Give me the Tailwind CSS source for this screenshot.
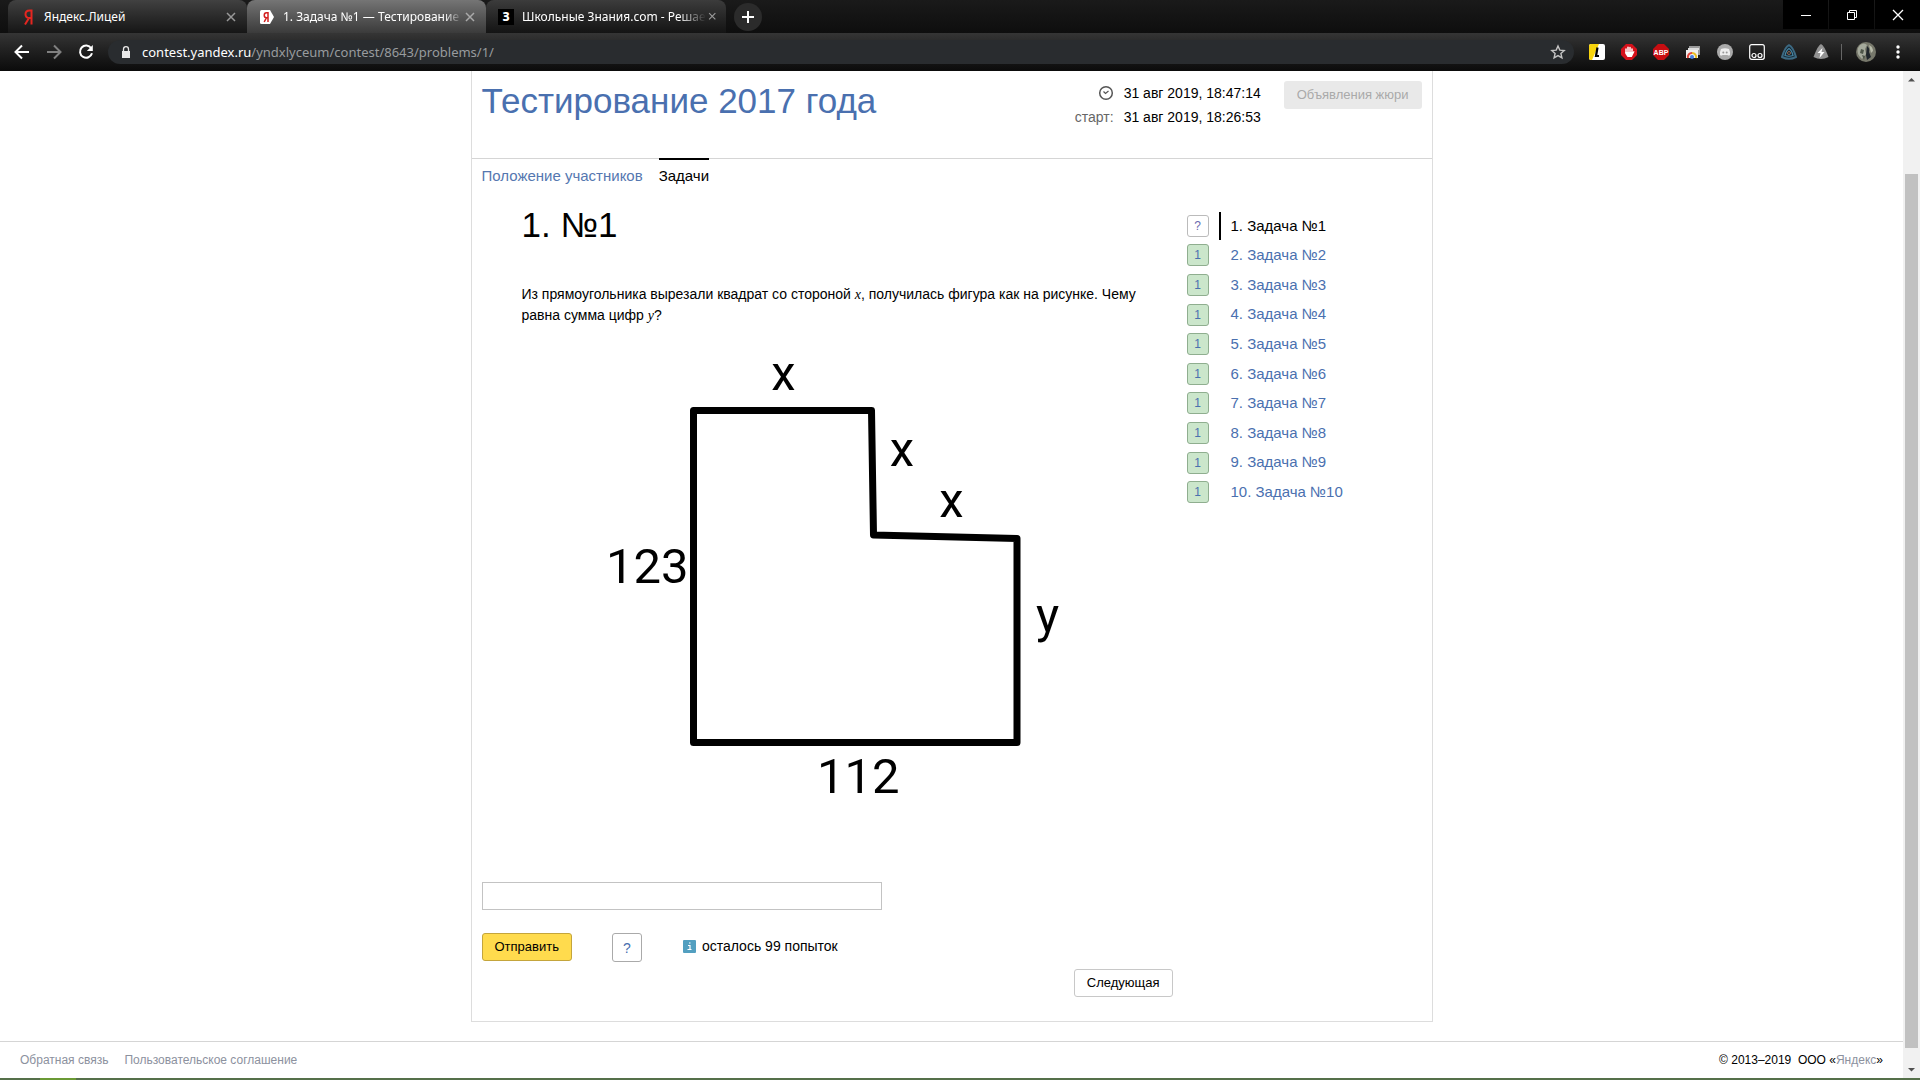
<!DOCTYPE html>
<html lang="ru">
<head>
  <meta charset="UTF-8">
  <meta name="viewport" content="width=device-width, initial-scale=1.0">
  <title>1. Задача №1 — Тестирование 2017 года</title>
  <script src="https://cdn.jsdelivr.net/npm/@tailwindcss/browser@4"></script>
</head>
<body class="h-screen flex flex-col overflow-hidden bg-white text-black font-['Liberation_Sans',Arial,sans-serif]">

  <!-- Browser window -->
  <header class="shrink-0 bg-[#111] font-['Noto_Sans','Open_Sans',sans-serif] text-white">
    <!-- Tab strip -->
    <div class="flex h-[33px] pl-2 bg-linear-to-b from-[#1a1a1a] to-[#0e0e0e]">
      <div class="flex items-center w-[239px] pl-3 pr-2 rounded-t-lg bg-linear-to-b from-[#414141] to-[#161616]">
        <svg class="w-5 h-5 shrink-0" viewBox="0 0 20 20" fill="none" stroke="#e52620" stroke-width="2"><path d="M11.500 2.500v15M11.500 3.500H9.500C6.500 3.500 5.500 5.500 5.500 7.200S6.500 11 9.500 11h2M9 11l-4 6.500"/></svg>
        <span class="flex-1 ml-1 text-xs truncate">Яндекс.Лицей</span>
        <button class="w-4 h-4" aria-label="Закрыть вкладку"><svg viewBox="0 0 16 16" fill="none" stroke="#999" stroke-width="1.500"><path d="M4 4l8 8M12 4l-8 8"/></svg></button>
      </div>
      <div class="flex items-center w-[239px] pl-3 pr-2 rounded-t-lg bg-linear-to-b from-[#757575] to-[#3b3b3b]">
        <svg class="w-4 h-4 shrink-0" viewBox="0 0 16 16"><path d="M1 2.500Q1 1 2.500 1H11l4 7-4 7H2.500Q1 15 1 13.500z" fill="#fff"/><path d="M9 3v10M9 3.700H7.500c-3 0-3 5 0 5H9M7.500 8.700L5.200 13" fill="none" stroke="#d3201f" stroke-width="1.500"/></svg>
        <span class="flex-1 ml-2 text-xs whitespace-nowrap mask-r-from-90%">1. Задача №1 — Тестирование</span>
        <button class="w-4 h-4" aria-label="Закрыть вкладку"><svg viewBox="0 0 16 16" fill="none" stroke="#aaa" stroke-width="1.500"><path d="M4 4l8 8M12 4l-8 8"/></svg></button>
      </div>
      <div class="flex items-center w-60 pl-3 pr-2 rounded-t-lg bg-linear-to-b from-[#3c3c3c] to-[#141414]">
        <span class="w-4 h-4 shrink-0 bg-black text-xs leading-4 font-extrabold text-center">З</span>
        <span class="flex-1 ml-2 text-xs whitespace-nowrap mask-r-from-85%">Школьные Знания.com - Решае</span>
        <button class="w-4 h-4" aria-label="Закрыть вкладку"><svg viewBox="0 0 16 16" fill="none" stroke="#999" stroke-width="1.500"><path d="M4 4l8 8M12 4l-8 8"/></svg></button>
      </div>
      <button class="flex items-center justify-center self-center w-7 h-7 ml-2 rounded-full bg-[#2b2b2b]" aria-label="Новая вкладка">
        <svg class="w-4 h-4" viewBox="0 0 16 16" stroke="#fff" stroke-width="2"><path d="M8 2v12M2 8h12"/></svg>
      </button>
      <div class="flex ml-auto h-[29px] gap-px">
        <button class="flex items-center justify-center w-[45px] bg-black" aria-label="Свернуть"><svg class="w-3 h-3" viewBox="0 0 12 12" stroke="#fff"><path d="M1 6.500h10"/></svg></button>
        <button class="flex items-center justify-center w-[45px] bg-black" aria-label="Развернуть"><svg class="w-3 h-3" viewBox="0 0 12 12" fill="none" stroke="#fff"><path d="M1.500 3.500h7v7h-7zM3.500 3.500v-2h7v7h-2"/></svg></button>
        <button class="flex items-center justify-center w-[45px] bg-black" aria-label="Закрыть"><svg class="w-3 h-3" viewBox="0 0 12 12" stroke="#fff" stroke-width="1.300"><path d="M1 1l10 10M11 1L1 11"/></svg></button>
      </div>
    </div>

    <!-- Toolbar -->
    <div class="flex items-center h-[38px] px-3 bg-linear-to-b from-[#353535] to-[#0b0b0b]">
      <div class="flex gap-3 mr-3">
        <button aria-label="Назад"><svg class="w-5 h-5" viewBox="0 0 20 20" fill="none" stroke="#fff" stroke-width="2"><path d="M17 10H4M10 3.500L3.500 10l6.500 6.500"/></svg></button>
        <button aria-label="Вперёд"><svg class="w-5 h-5" viewBox="0 0 20 20" fill="none" stroke="#808080" stroke-width="2"><path d="M3 10h13M10 3.500l6.500 6.500-6.500 6.500"/></svg></button>
        <button aria-label="Обновить"><svg class="w-5 h-5" viewBox="0 0 20 20" fill="none" stroke="#fff" stroke-width="2"><path d="M15.200 6.200A6.100 6.100 0 1 0 16 11.300"/><path d="M16.800 3v6h-6z" fill="#fff" stroke="none"/></svg></button>
      </div>
      <div class="flex flex-1 items-center h-6 pl-3 pr-2 rounded-full bg-[#292c2f]">
        <svg class="w-3 h-3 shrink-0" viewBox="0 0 12 12"><path d="M2 5h8v7H2z" fill="#e8e8e8"/><path d="M3.500 5V3.200a2.500 2.500 0 0 1 5 0V5" fill="none" stroke="#e8e8e8" stroke-width="1.300"/></svg>
        <span class="flex-1 ml-2.5 pt-px text-[13px] text-[#989b9e]"><span class="text-white">contest.yandex.ru</span>/yndxlyceum/contest/8643/problems/1/</span>
        <svg class="w-4 h-4" viewBox="0 0 16 16" fill="none" stroke="#c4c4c4" stroke-width="1.400"><path d="M8 2l1.800 4.100 4.400.4-3.300 3 1 4.400L8 11.600l-3.900 2.300 1-4.400-3.300-3 4.400-.4z"/></svg>
      </div>
      <div class="flex items-center gap-4 ml-[15px]">
        <svg class="w-4 h-4" viewBox="0 0 16 16"><rect width="16" height="16" rx="2" fill="#fff"/><path d="M2 0h8L3 16H2a2 2 0 0 1-2-2V2a2 2 0 0 1 2-2z" fill="#f8d40c"/><path d="M8.500 3.500L7 12h3" fill="none" stroke="#000" stroke-width="2.200"/></svg>
        <svg class="w-4 h-4" viewBox="0 0 16 16"><path d="M5 0h6l5 5v6l-5 5H5l-5-5V5z" fill="#d5101a"/><path d="M5 9V5M7 8V3.200M9 8V3.500M11 9V5" stroke="#fff" stroke-width="1.500" stroke-linecap="round"/><path d="M4.300 8h7.500l1-1c1 0 .6 1 0 2l-2 4H6.500l-2-3z" fill="#fff"/></svg>
        <svg class="w-4 h-4" viewBox="0 0 16 16"><path d="M5 0h6l5 5v6l-5 5H5l-5-5V5z" fill="#c70d11"/><text x="8" y="10.500" fill="#fff" font-family="Liberation Sans" font-size="7" font-weight="700" text-anchor="middle">ABP</text></svg>
        <svg class="w-4 h-4" viewBox="0 0 16 16"><path d="M4 2h11v9H4z" fill="#999"/><path d="M3 4h11v2H3z" fill="#ddd"/><path d="M1 6h12v8H1z" fill="#eee"/><path d="M3 14a4 4 0 0 1 4-5" fill="none" stroke="#e1453a" stroke-width="2"/><path d="M7 9a4 4 0 0 1 4 5" fill="none" stroke="#e9bd20" stroke-width="2"/><circle cx="7" cy="13" r="2" fill="#467ee0"/></svg>
        <svg class="w-4 h-4" viewBox="0 0 16 16"><circle cx="8" cy="8" r="8" fill="#aaa"/><path d="M4 5q4-1.500 8 0 1.500 3 1 6-1.500 1-2.500 0H5.500Q4.500 12 3 11q-.5-3 1-6z" fill="#eee"/><circle cx="6.300" cy="8.500" r="1" fill="#999"/><circle cx="9.700" cy="8.500" r="1" fill="#999"/></svg>
        <svg class="w-4 h-4" viewBox="0 0 16 16" fill="none" stroke="#fff" stroke-width="1.200"><rect x=".7" y=".7" width="14.600" height="14.600" rx="2"/><circle cx="5" cy="11.500" r="2"/><circle cx="11" cy="11.500" r="2"/></svg>
        <svg class="w-4 h-4" viewBox="0 0 16 16" fill="none"><path d="M8 1.200Q12 3 15 13q-7 3.500-14 0Q4 3 8 1.200z" fill="#16242e" stroke="#3c6982" stroke-width="2"/><path d="M8 4.500q3 2 4 7-4 1.500-8 0 1-5 4-7z" stroke="#4787a5" stroke-width="1.200"/><circle cx="8" cy="9" r="1.500" stroke="#8a6450"/></svg>
        <svg class="w-4 h-4" viewBox="0 0 16 16"><path d="M8 0q3 1 7.500 13-7.500 4-15 0Q5 1 8 0z" fill="#929292"/><path d="M9.500 4L4.500 9h3l-1 5 5-6h-3z" fill="#fff"/></svg>
      </div>
      <div class="w-px h-4 ml-3 mr-3.5 bg-[#666]"></div>
      <div class="flex items-center gap-3">
        <svg class="w-5 h-5" viewBox="0 0 20 20"><circle cx="10" cy="10" r="10" fill="#77786b"/><path d="M4 3q4-3 7 0L9 7l1 5-4 5Q0 12 2 6z" fill="#a5aa9c"/><path d="M5 7l3 1-1 4-3-1zM6 13l3 1-1 4z" fill="#4d5548"/><path d="M11 4q3 2 2 6l2 5-4 3-1-5z" fill="#20272c"/><path d="M13 3q4 2 4 6l-2 2z" fill="#b9bcab"/></svg>
        <button aria-label="Меню"><svg class="w-5 h-5" viewBox="0 0 20 20" fill="#fff"><circle cx="10" cy="5" r="1.700"/><circle cx="10" cy="10" r="1.700"/><circle cx="10" cy="15" r="1.700"/></svg></button>
      </div>
    </div>
  </header>

  <div class="flex flex-1 min-h-0">
    <div class="flex flex-col flex-1">
      <!-- Contest card -->
      <main class="w-full max-w-[962px] mx-auto pb-6 border-x border-b border-[#ddd]">
        <div class="flex items-start px-2.5 pt-2.5 pb-[29px] border-b border-[#d5d5d5]">
          <a href="#" class="flex-1 text-[35px] leading-10 text-[#4a70af]">Тестирование 2017 года</a>
          <dl class="grid grid-cols-[auto_auto] gap-x-2.5 text-sm leading-6">
            <dt class="flex items-center justify-end">
              <svg class="w-4 h-4" viewBox="0 0 16 16" fill="none" stroke="#555" stroke-width="1.500"><circle cx="8" cy="8" r="6.300"/><path d="M5.500 6.500L7.500 8.500l3-2.500" stroke-width="1.200"/></svg>
            </dt>
            <dd>31 авг 2019, 18:47:14</dd>
            <dt class="text-[#666]">старт:</dt>
            <dd>31 авг 2019, 18:26:53</dd>
          </dl>
          <button disabled class="h-7 px-[13px] ml-[23px] rounded-[3px] bg-[#e9e9e9] text-[13px] text-[#aaa]">Объявления жюри</button>
        </div>

        <nav class="flex gap-4 -mt-px pl-2.5 text-[15px] leading-5">
          <a href="#" class="pt-1.5 mt-0.5 text-[#5577b0]">Положение участников</a>
          <a href="#" class="pt-1.5 border-t-2 border-black">Задачи</a>
        </nav>

        <div class="flex pt-[19px]">
          <div class="flex-1 min-w-0 pl-2.5">
            <article class="pl-10">
              <h1 class="text-[35px] leading-10">1. №1</h1>
              <p class="mt-[39px] max-w-[630px] text-sm leading-5">Из прямоугольника вырезали квадрат со стороной <i class="font-['Liberation_Serif',serif]">x</i>, получилась фигура как на рисунке. Чему равна сумма цифр <i class="font-['Liberation_Serif',serif]">y</i>?</p>
              <svg class="w-full max-w-[500px] mt-3.5 ml-17" viewBox="0 0 500 470" font-family="Roboto, sans-serif" font-size="49">
                <path d="M103.500 70.500H281.500L283.500 195L427 198.500V402.500H103.500z" fill="none" stroke="#000" stroke-width="7" stroke-linejoin="round"/>
                <text x="193.500" y="50" text-anchor="middle">x</text>
                <text x="312" y="126" text-anchor="middle">x</text>
                <text x="361.500" y="176.500" text-anchor="middle">x</text>
                <text x="457.500" y="292" text-anchor="middle">y</text>
                <text x="16" y="243">123</text>
                <text x="227" y="453">112</text>
              </svg>
            </article>

            <form class="mt-[72px]">
              <input type="text" aria-label="Ответ" class="block w-full max-w-[400px] h-7 px-2 border border-[#c3c3c3] text-sm">
              <div class="flex items-start mt-[23px]">
                <button type="submit" class="h-7 px-3 border border-[#c4a53c] rounded-[3px] bg-[#ffdb4d] text-[13px]">Отправить</button>
                <button type="button" class="w-[30px] h-[29px] ml-10 border border-[#aaa] rounded-[3px] text-sm text-[#4a70af]">?</button>
                <p class="flex items-center gap-1.5 ml-[41px] text-sm leading-[26px]">
                  <svg class="w-[13px] h-[13px]" viewBox="0 0 13 13"><rect width="13" height="13" rx="1" fill="#529fc0"/><path d="M5 5.500h2v4M4.500 9.500h4M6 3h1.500" fill="none" stroke="#fff" stroke-width="1.200"/></svg>
                  осталось 99 попыток
                </p>
              </div>
              <div class="flex justify-end mt-[7px] pr-3.5">
                <button type="button" class="h-7 px-3 border border-[#c8c8c8] rounded-[3px] text-[13px]">Следующая</button>
              </div>
            </form>
          </div>

          <!-- Problem list -->
          <ul class="grid grid-rows-10 w-[245px] h-[296px] mt-1.5 text-[15px] text-[#4a70af]">
            <li class="flex items-center gap-2.5 text-black"><span class="w-[22px] h-[22px] border border-[#bbb] rounded-[3px] text-xs leading-5 text-center text-[#6a6ab0]">?</span><a href="#" class="pl-2.5 border-l-2 border-black leading-7">1. Задача №1</a></li>
            <li class="flex items-center gap-[22px]"><span class="w-[22px] h-[22px] border border-[#8fae8f] rounded-[3px] bg-[#cbe6cb] text-xs leading-5 text-center">1</span><a href="#">2. Задача №2</a></li>
            <li class="flex items-center gap-[22px]"><span class="w-[22px] h-[22px] border border-[#8fae8f] rounded-[3px] bg-[#cbe6cb] text-xs leading-5 text-center">1</span><a href="#">3. Задача №3</a></li>
            <li class="flex items-center gap-[22px]"><span class="w-[22px] h-[22px] border border-[#8fae8f] rounded-[3px] bg-[#cbe6cb] text-xs leading-5 text-center">1</span><a href="#">4. Задача №4</a></li>
            <li class="flex items-center gap-[22px]"><span class="w-[22px] h-[22px] border border-[#8fae8f] rounded-[3px] bg-[#cbe6cb] text-xs leading-5 text-center">1</span><a href="#">5. Задача №5</a></li>
            <li class="flex items-center gap-[22px]"><span class="w-[22px] h-[22px] border border-[#8fae8f] rounded-[3px] bg-[#cbe6cb] text-xs leading-5 text-center">1</span><a href="#">6. Задача №6</a></li>
            <li class="flex items-center gap-[22px]"><span class="w-[22px] h-[22px] border border-[#8fae8f] rounded-[3px] bg-[#cbe6cb] text-xs leading-5 text-center">1</span><a href="#">7. Задача №7</a></li>
            <li class="flex items-center gap-[22px]"><span class="w-[22px] h-[22px] border border-[#8fae8f] rounded-[3px] bg-[#cbe6cb] text-xs leading-5 text-center">1</span><a href="#">8. Задача №8</a></li>
            <li class="flex items-center gap-[22px]"><span class="w-[22px] h-[22px] border border-[#8fae8f] rounded-[3px] bg-[#cbe6cb] text-xs leading-5 text-center">1</span><a href="#">9. Задача №9</a></li>
            <li class="flex items-center gap-[22px]"><span class="w-[22px] h-[22px] border border-[#8fae8f] rounded-[3px] bg-[#cbe6cb] text-xs leading-5 text-center">1</span><a href="#">10. Задача №10</a></li>
          </ul>
        </div>
      </main>

      <footer class="flex items-center gap-4 h-[37px] mt-auto px-5 border-t border-[#d5d5d5] text-xs text-[#8c919e]">
        <a href="#">Обратная связь</a>
        <a href="#">Пользовательское соглашение</a>
        <p class="ml-auto text-black">© 2013–2019&nbsp; ООО «<a href="#" class="text-[#8c919e]">Яндекс</a>»</p>
      </footer>
    </div>

    <!-- Scrollbar -->
    <div class="flex flex-col items-center w-[17px] bg-[#f1f1f1]">
      <svg class="w-[17px] h-[17px]" viewBox="0 0 17 17"><path d="M5 10.500h7L8.500 7z" fill="#505050"/></svg>
      <div class="flex-1 w-[13px] mt-[86px] bg-[#c1c1c1]"></div>
      <svg class="w-[17px] h-[17px] mt-[13px]" viewBox="0 0 17 17"><path d="M5 7h7l-3.500 3.500z" fill="#505050"/></svg>
    </div>
  </div>

  <div class="shrink-0 h-0.5 pl-10 bg-[#55704a]"><div class="w-9 h-full bg-[#6b9a35]"></div></div>
</body>
</html>
